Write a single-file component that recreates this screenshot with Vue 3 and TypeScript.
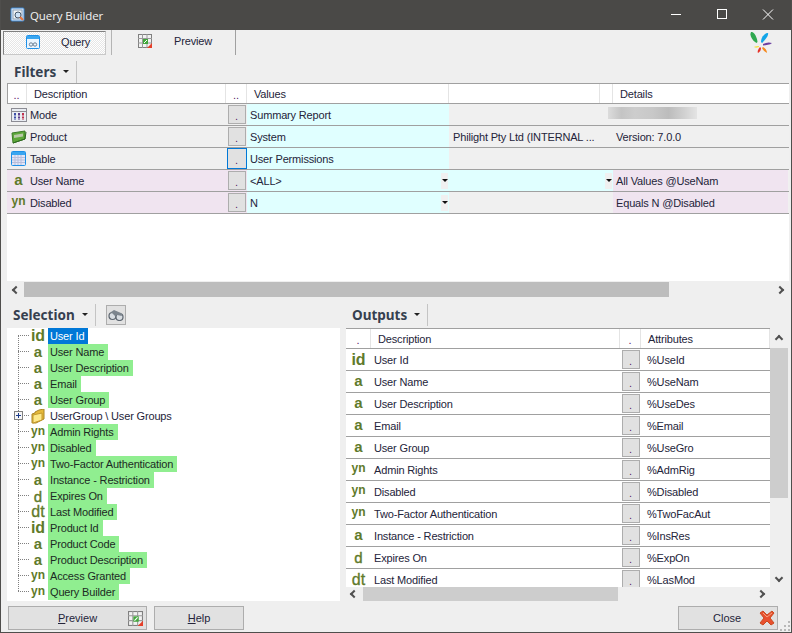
<script setup lang="ts">

type FilterRow = {
    icon: 'mode' | 'product' | 'table' | 'a' | 'yn',
    name: string,
    value: string,
    extra: string,
    details: string,
    blurred?: boolean,
    focused?: boolean,
    pick?: number,
}

const filter_rows: FilterRow[] = [
    { icon: 'mode', name: 'Mode', value: 'Summary Report', extra: '', details: '', blurred: true },
    { icon: 'product', name: 'Product', value: 'System', extra: 'Philight Pty Ltd (INTERNAL ...', details: 'Version: 7.0.0' },
    { icon: 'table', name: 'Table', value: 'User Permissions', extra: '', details: '', focused: true },
    { icon: 'a', name: 'User Name', value: '<ALL>', extra: '', details: 'All Values @UseNam', pick: 2 },
    { icon: 'yn', name: 'Disabled', value: 'N', extra: '', details: 'Equals N @Disabled', pick: 1 },
]

const tree_items = [
    ['id', 'User Id'],
    ['a', 'User Name'],
    ['a', 'User Description'],
    ['a', 'Email'],
    ['a', 'User Group'],
    ['folder', 'UserGroup \\ User Groups'],
    ['yn', 'Admin Rights'],
    ['yn', 'Disabled'],
    ['yn', 'Two-Factor Authentication'],
    ['a', 'Instance - Restriction'],
    ['d', 'Expires On'],
    ['dt', 'Last Modified'],
    ['id', 'Product Id'],
    ['a', 'Product Code'],
    ['a', 'Product Description'],
    ['yn', 'Access Granted'],
    ['yn', 'Query Builder'],
]

const output_rows = [
    ['id', 'User Id', '%UseId'],
    ['a', 'User Name', '%UseNam'],
    ['a', 'User Description', '%UseDes'],
    ['a', 'Email', '%Email'],
    ['a', 'User Group', '%UseGro'],
    ['yn', 'Admin Rights', '%AdmRig'],
    ['yn', 'Disabled', '%Disabled'],
    ['yn', 'Two-Factor Authentication', '%TwoFacAut'],
    ['a', 'Instance - Restriction', '%InsRes'],
    ['d', 'Expires On', '%ExpOn'],
    ['dt', 'Last Modified', '%LasMod'],
]

</script>

<template>
    <div class="window">
        <div class="titlebar">
            <svg class="title-icon" width="16" height="16" viewBox="0 0 16 16">
                <rect x="1" y="1" width="13" height="13" rx="1" fill="#dbe9f8" stroke="#3c86d0" />
                <rect x="3" y="3" width="9" height="9" fill="#f4f4f4" stroke="#8aa0b8" />
                <circle cx="8" cy="8" r="3" fill="#cfe3f7" stroke="#44566a" />
                <path d="M10 10l3 3" stroke="#e8743b" stroke-width="2" />
            </svg>
            <span class="title-text">Query Builder</span>
            <div class="window-controls">
                <svg width="46" height="30" viewBox="0 0 46 30"><path d="M18 14.500h10" stroke="#fff" /></svg>
                <svg width="46" height="30" viewBox="0 0 46 30"><rect x="18.500" y="9.500" width="9" height="9" fill="none" stroke="#fff" /></svg>
                <svg width="46" height="30" viewBox="0 0 46 30"><path d="M18 9.500l10 10M28 9.500l-10 10" stroke="#fff" /></svg>
            </div>
        </div>

        <div class="tabs">
            <div class="tab tab-query">
                <svg width="15" height="15" viewBox="0 0 15 15">
                    <rect x="0.500" y="0.500" width="13" height="13" rx="1" fill="#eaf5ff" stroke="#1e90e8" />
                    <rect x="1" y="1" width="12" height="3" fill="#3aa6f0" />
                    <circle cx="5" cy="9.500" r="1.700" fill="none" stroke="#6a7f94" />
                    <circle cx="9" cy="9.500" r="1.700" fill="none" stroke="#6a7f94" />
                </svg>
                <span>Query</span>
            </div>
            <div class="tab tab-preview">
                <svg width="14" height="14" viewBox="0 0 14 14">
                    <rect x="0.500" y="0.500" width="13" height="13" fill="#f2f2f2" stroke="#808080" />
                    <path d="M0 4.500h14M0 9h14M4.500 0v14M9 0v14" stroke="#9a9a9a" />
                    <rect x="5" y="5" width="5" height="5" fill="#42a83c" />
                    <path d="M6 9l3-3" stroke="#fff" />
                    <path d="M9 14l5-5v5z" fill="#e5402a" />
                </svg>
                <span>Preview</span>
            </div>
            <svg class="logo" width="24" height="24" viewBox="0 0 24 24">
                <path d="M1 1c3-1 6 5 6.500 10l-1 1C3 10-1 5 1 1z" fill="#2fa84f" />
                <path d="M18 2c1 3-4 8-6 10l-1-1c0-4 3-9 7-9z" fill="#12a5e8" />
                <path d="M22 12c-2 2-6 2-9 2.500V13c3-1.500 6-2 9-1z" fill="#6b3fa0" />
                <path d="M17 22c-2-1-4-3-5-5l1-1c2 1 4 3 4 6z" fill="#f58a1f" />
                <path d="M8 22c-1-1 0-4 2-6l1 1c0 2-1 4-3 5z" fill="#e63329" />
                <path d="M4 16c1-1 3-1 5-1v1c-2 1-4 1-5 0z" fill="#f7e14a" />
            </svg>
        </div>

        <div class="section-head filters-head">
            <span class="section-title">Filters</span>
            <span class="caret"></span>
            <span class="section-sep"></span>
        </div>

        <div class="filters">
            <div class="filter-grid">
                <div class="filter-cols filter-header">
                    <div class="hc hc-center">..</div>
                    <div class="hc hc-desc">Description</div>
                    <div class="hc hc-center">..</div>
                    <div class="hc hc-desc">Values</div>
                    <div class="hc"></div>
                    <div class="hc"></div>
                    <div class="hc hc-desc last">Details</div>
                </div>
                <div v-for="row in filter_rows" :key="row.name" class="filter-cols filter-row" :class="{ pink: row.pick }">
                    <div class="filter-desc">
                        <span class="row-icon">
                            <svg v-if="row.icon === 'mode'" width="16" height="16" viewBox="0 0 16 16">
                                <rect x="0.500" y="1.500" width="15" height="13" fill="#e9edf3" stroke="#8c8c94" />
                                <path d="M0 4.500h16" stroke="#8c8c94" />
                                <path d="M3 6h2v7H3z" fill="#3d4fa8" />
                                <path d="M7 6h2v7H7z" fill="#5b3f8f" />
                                <path d="M11 6h2v7h-2z" fill="#c0324f" />
                                <path d="M2 9h12M2 12h12" stroke="#e9edf3" />
                            </svg>
                            <svg v-else-if="row.icon === 'product'" width="16" height="16" viewBox="0 0 16 16">
                                <path d="M1 4l13-2v8L2 14z" fill="#5da83a" stroke="#3d7a2a" />
                                <path d="M3 6l9-1.500v3L3 9z" fill="#b9c9a8" />
                                <path d="M2 14l12-4 1-7" fill="none" stroke="#2e6a20" />
                            </svg>
                            <svg v-else-if="row.icon === 'table'" width="16" height="16" viewBox="0 0 16 16">
                                <rect x="0.500" y="0.500" width="14" height="14" rx="1" fill="#e2e6f6" stroke="#1e90e8" />
                                <rect x="1" y="1" width="13" height="3" fill="#3aa6f0" />
                                <path d="M1 6.500h13M1 9h13M1 11.500h13M4 4v10M7 4v10M10 4v10" stroke="#b9bedb" />
                            </svg>
                            <span v-else class="glyph" :class="`glyph-${row.icon}`">{{ row.icon }}</span>
                        </span>
                        <span>{{ row.name }}</span>
                    </div>
                    <div class="btn-cell">
                        <button class="dot-btn" :class="{ focused: row.focused }">.</button>
                    </div>
                    <div class="filter-value cyan">
                        <span>{{ row.value }}</span>
                        <span v-if="row.pick" class="pick"><i class="mini-caret"></i></span>
                    </div>
                    <div class="filter-extra" :class="{ cyan: row.pick === 2 }">{{ row.extra }}</div>
                    <div class="filter-pick" :class="{ cyan: row.pick === 2 }">
                        <span v-if="row.pick === 2" class="pick"><i class="mini-caret"></i></span>
                    </div>
                    <div class="filter-details">
                        <span v-if="row.blurred" class="blurred"></span>
                        <template v-else>{{ row.details }}</template>
                    </div>
                </div>
            </div>
            <div class="hscroll top-scroll">
                <span class="arrow arrow-left"></span>
                <span class="thumb"></span>
                <span class="arrow arrow-right"></span>
            </div>
        </div>

        <div class="panels">
            <div class="panel-left">
                <div class="section-head panel-head">
                    <span class="section-title">Selection</span>
                    <span class="caret"></span>
                    <span class="section-sep"></span>
                    <span class="bino-btn">
                        <svg width="16" height="12" viewBox="0 0 16 12">
                            <circle cx="4.500" cy="7" r="3.500" fill="#d8dde2" stroke="#5d6670" stroke-width="1.200" />
                            <circle cx="11.500" cy="8" r="3.500" fill="#d8dde2" stroke="#5d6670" stroke-width="1.200" />
                            <path d="M3 3l3-2 7 3 1 3-5-1-2 1z" fill="#7c858e" />
                        </svg>
                    </span>
                </div>
                <div class="tree">
                    <div v-for="[kind, label], index in tree_items" :key="label" class="tree-row">
                        <span class="twig" :class="{ first: index === 0, last: index === tree_items.length - 1 }">
                            <span v-if="kind === 'folder'" class="plus"></span>
                        </span>
                        <span class="tree-icon">
                            <svg v-if="kind === 'folder'" width="15" height="15" viewBox="0 0 15 15">
                                <path d="M1 5l3-1V3l4-2 5-1v10l-8 4H1z" fill="#e5b93a" stroke="#a98527" />
                                <path d="M2 6l9-2v7l-9 3z" fill="#fde98a" stroke="#c49a2d" />
                            </svg>
                            <span v-else class="glyph" :class="`glyph-${kind}`">{{ kind }}</span>
                        </span>
                        <span v-if="kind === 'folder'" class="tree-label plain">{{ label }}</span>
                        <span v-else class="tree-label" :class="index === 0 ? 'selected' : 'marked'">{{ label }}</span>
                    </div>
                </div>
            </div>

            <div class="panel-right">
                <div class="section-head panel-head outputs-head">
                    <span class="section-title">Outputs</span>
                    <span class="caret"></span>
                    <span class="section-sep"></span>
                </div>
                <div class="output-wrap">
                    <div class="output-main">
                        <div class="output-view">
                            <div class="output-cols output-header">
                                <div class="hc hc-center">.</div>
                                <div class="hc hc-desc">Description</div>
                                <div class="hc hc-center">.</div>
                                <div class="hc hc-attr">Attributes</div>
                            </div>
                            <div v-for="[kind, label, attr] in output_rows" :key="label" class="output-cols output-row">
                                <div class="out-icon"><span class="glyph" :class="`glyph-${kind}`">{{ kind }}</span></div>
                                <div class="out-name">{{ label }}</div>
                                <div class="btn-cell"><button class="dot-btn">.</button></div>
                                <div class="out-attr">{{ attr }}</div>
                            </div>
                        </div>
                        <div class="vscroll">
                            <span class="arrow arrow-up"></span>
                            <span class="vthumb"></span>
                            <span class="arrow arrow-down"></span>
                        </div>
                    </div>
                    <div class="hscroll bottom-scroll">
                        <span class="arrow arrow-left"></span>
                        <span class="thumb"></span>
                        <span class="arrow arrow-right"></span>
                    </div>
                </div>
            </div>
        </div>

        <div class="footer">
            <button class="foot-btn preview-btn">
                <span><u>P</u>review</span>
                <svg width="15" height="15" viewBox="0 0 14 14">
                    <rect x="0.500" y="0.500" width="13" height="13" fill="#f2f2f2" stroke="#808080" />
                    <path d="M0 4.500h14M0 9h14M4.500 0v14M9 0v14" stroke="#9a9a9a" />
                    <rect x="5" y="5" width="5" height="5" fill="#42a83c" />
                    <path d="M6 9l3-3" stroke="#fff" />
                    <path d="M9 14l5-5v5z" fill="#e5402a" />
                </svg>
            </button>
            <button class="foot-btn help-btn"><span><u>H</u>elp</span></button>
            <button class="foot-btn close-btn">
                <span>Close</span>
                <svg width="16" height="16" viewBox="0 0 16 16">
                    <path d="M1 3l3-2 4 4 5-4 2 2-4 5 4 5-3 2-4-4-4 4-3-2 4-5z" fill="#e8502f" stroke="#c94a20" />
                    <path d="M4 3l4 4 5-4" fill="none" stroke="#f6a27e" />
                </svg>
            </button>
            <svg class="grip" width="12" height="12" viewBox="0 0 12 12">
                <path d="M9 1h2v2H9zM5 5h2v2H5zM9 5h2v2H9zM1 9h2v2H1zM5 9h2v2H5zM9 9h2v2H9z" fill="#b8b8b8" />
            </svg>
        </div>
    </div>
</template>

<style scoped>
* {
    box-sizing: border-box;
}

.window {
    width: 792px;
    height: 633px;
    display: flex;
    flex-direction: column;
    background: #efefef;
    border: 1px solid #4f4e4c;
    border-top: 0;
    font-family: "Liberation Sans", Arial, sans-serif;
    font-size: 11px;
    letter-spacing: -0.16px;
    color: #24243a;
    overflow: hidden;
}

.titlebar {
    height: 30px;
    flex: none;
    margin: 0 -1px;
    padding-left: 10px;
    display: flex;
    align-items: center;
    background: #4a4947;
    color: #f2f2f2;
}

.title-text {
    margin-left: 4px;
    font-family: "Open Sans", sans-serif;
    font-size: 11.5px;
    letter-spacing: -0.1px;
}

.window-controls {
    margin-left: auto;
    display: flex;
    height: 30px;
    margin-right: 1px;
}

.window-controls svg {
    display: block;
}

.tabs {
    height: 25px;
    flex: none;
    display: flex;
    padding-left: 2px;
}

.tab {
    display: flex;
    align-items: center;
    height: 24px;
}

.tab-query {
    width: 103px;
    margin-top: 1px;
    padding: 0 0 2px 22px;
    gap: 20px;
    border: 1px solid #c8c8c8;
    border-left-color: #808080;
    border-top-color: #808080;
    background: repeating-conic-gradient(#e6e6e6 0 25%, #ffffff 0 50%) 0 0 / 2px 2px;
}

.tab-preview {
    width: 125px;
    height: 25px;
    margin-left: 5px;
    padding: 0 0 3px 26px;
    gap: 22px;
    border-left: 1px solid #b4b4b4;
    border-right: 1px solid #a0a0a0;
}

.logo {
    margin-left: auto;
    margin-right: 17px;
    margin-top: 1px;
}

.section-head {
    display: flex;
    align-items: center;
    flex: none;
}

.filters-head {
    height: 28px;
    padding: 5px 0 0 13px;
}

.section-title {
    font-family: "Noto Sans", sans-serif;
    font-weight: 700;
    font-size: 13.5px;
    letter-spacing: 0;
    color: #36404f;
}

.caret {
    width: 0;
    height: 0;
    margin-left: 7px;
    border: 3px solid transparent;
    border-top: 3px solid #222;
    border-bottom: 0;
}

.section-sep {
    width: 1px;
    height: 22px;
    margin-left: 7px;
    background: #c4c4c4;
}

.filters {
    height: 215px;
    flex: none;
    margin: 0 2px 0 6px;
    display: flex;
    flex-direction: column;
}

.filter-grid {
    height: 198px;
    background: #fff;
    flex: none;
}

.filter-cols {
    display: grid;
    grid-template-columns: 20px 199px 21px 202px 151px 13px 175px;
}

.filter-header {
    height: 21px;
    border-top: 1px solid #a0a0a0;
    border-bottom: 1px solid #a0a0a0;
    box-shadow: inset 1px 0 #a0a0a0;
}

.hc {
    display: flex;
    align-items: center;
    border-right: 1px solid #e4e4e4;
    white-space: nowrap;
}

.hc.last {
    border-right: 0;
}

.hc-center {
    justify-content: center;
    padding-top: 3px;
    color: #5a1a6a;
}

.hc-desc {
    padding-left: 7px;
}

.hc-attr {
    padding-left: 7px;
}

.filter-row {
    height: 22px;
    border-bottom: 1px solid #a0a0a0;
    background: #f0f0f0;
}

.filter-row.pink .filter-desc,
.filter-row.pink .btn-cell,
.filter-row.pink .filter-details {
    background: #f0e4f0;
}

.filter-desc {
    grid-column: span 2;
    display: flex;
    align-items: center;
    white-space: nowrap;
}

.row-icon {
    width: 23px;
    display: flex;
    justify-content: center;
}

.btn-cell {
    display: flex;
    align-items: center;
    justify-content: center;
}

.dot-btn {
    width: 18px;
    height: 19px;
    padding: 3px 0 0;
    border: 1px solid #adadad;
    background: #e1e1e1;
    color: #5a1a6a;
    font-family: "Liberation Sans", Arial, sans-serif;
    font-size: 11px;
    line-height: 1;
}

.dot-btn.focused {
    width: 20px;
    height: 21px;
    border: 1px solid #0078d7;
}

.filter-value {
    grid-column: span 1;
    display: flex;
    align-items: center;
    justify-content: space-between;
    padding-left: 3px;
}

.cyan {
    background: #e0ffff;
}

.pick {
    width: 7px;
    height: 16px;
    display: flex;
    align-items: center;
    justify-content: center;
    background: #f0f0f0;
    margin-right: 1px;
}

.mini-caret {
    width: 0;
    height: 0;
    border: 3px solid transparent;
    border-top: 3px solid #111;
    border-bottom: 0;
}

.filter-extra {
    display: flex;
    align-items: center;
    padding-left: 4px;
    white-space: nowrap;
    overflow: hidden;
}

.filter-pick {
    display: flex;
    align-items: center;
    justify-content: flex-end;
}

.filter-details {
    display: flex;
    align-items: center;
    padding-left: 3px;
    white-space: nowrap;
}

.blurred {
    width: 89px;
    height: 12px;
    margin-left: -8px;
    margin-top: -3px;
    background: linear-gradient(90deg, #dcdcdc, #c4c4c4 15%, #cdcdcd 30%, #c8c8c8 50%, #bcbcbc 68%, #d0d0d0 85%, #e4e4e4);
}

.hscroll {
    display: flex;
    align-items: center;
    flex: none;
}

.top-scroll {
    height: 17px;
}

.top-scroll .thumb {
    width: 645px;
    height: 15px;
    background: #bdbdbd;
}

.top-scroll .arrow-right {
    margin-left: auto;
}

.top-scroll .arrow-left {
    margin: 0 5px 0 6px;
}

.arrow {
    width: 6px;
    height: 6px;
    flex: none;
    border-top: 2px solid #505050;
    border-left: 2px solid #505050;
}

.arrow-left {
    transform: rotate(-45deg);
}

.arrow-right {
    transform: rotate(135deg);
    margin-right: 6px;
}

.arrow-up {
    transform: rotate(45deg);
}

.arrow-down {
    transform: rotate(225deg);
}

.panels {
    height: 303px;
    flex: none;
    display: flex;
    padding-left: 6px;
}

.panel-left {
    width: 333px;
    flex: none;
    display: flex;
    flex-direction: column;
}

.panel-head {
    height: 30px;
    padding: 3px 0 0 6px;
}

.bino-btn {
    width: 20px;
    height: 20px;
    margin-left: 10px;
    display: flex;
    align-items: center;
    justify-content: center;
    border: 1px solid #adadad;
    background: #e1e1e1;
}

.tree {
    height: 273px;
    background: #fff;
}

.tree-row {
    height: 16px;
    display: flex;
    align-items: center;
}

.twig {
    position: relative;
    width: 12px;
    height: 16px;
    flex: none;
    margin-left: 11px;
    background:
        repeating-linear-gradient(90deg, #808080 0 1px, transparent 1px 2px) 0 7px / 100% 1px no-repeat,
        repeating-linear-gradient(180deg, #808080 0 1px, transparent 1px 2px) 0 0 / 1px 100% no-repeat;
}

.twig.first {
    background:
        repeating-linear-gradient(90deg, #808080 0 1px, transparent 1px 2px) 0 7px / 100% 1px no-repeat,
        repeating-linear-gradient(180deg, #808080 0 1px, transparent 1px 2px) 0 8px / 1px 8px no-repeat;
}

.twig.last {
    background:
        repeating-linear-gradient(90deg, #808080 0 1px, transparent 1px 2px) 0 7px / 100% 1px no-repeat,
        repeating-linear-gradient(180deg, #808080 0 1px, transparent 1px 2px) 0 0 / 1px 8px no-repeat;
}

.plus {
    position: absolute;
    left: -4px;
    top: 3px;
    width: 9px;
    height: 9px;
    border: 1px solid #808080;
    background:
        linear-gradient(#1a3a8a, #1a3a8a) center / 5px 1px no-repeat,
        linear-gradient(#1a3a8a, #1a3a8a) center / 1px 5px no-repeat,
        #f6f6f6;
}

.tree-icon {
    width: 16px;
    height: 16px;
    flex: none;
    margin-right: 2px;
    display: flex;
    align-items: center;
    justify-content: center;
}

.tree-label {
    height: 16px;
    line-height: 16px;
    padding: 0 4px 0 2px;
    white-space: nowrap;
}

.marked {
    background: #90ee90;
    color: #1c2a24;
}

.selected {
    background: #0078d7;
    color: #fff;
}

.glyph {
    display: block;
    line-height: 1;
    font-family: "Liberation Sans", Arial, sans-serif;
    font-weight: 700;
    letter-spacing: 0;
    color: #5f7a2b;
    white-space: nowrap;
}

.glyph-id {
    font-size: 16px;
}

.glyph-a {
    font-size: 15px;
    margin-top: -2px;
}

.glyph-yn {
    font-size: 12px;
    margin-top: -3px;
}

.glyph-d {
    font-size: 15px;
    font-weight: 400;
    -webkit-text-stroke: 0.4px #5f7a2b;
}

.glyph-dt {
    font-size: 16px;
    font-weight: 400;
    -webkit-text-stroke: 0.3px #5f7a2b;
}

.panel-right {
    width: 442px;
    flex: none;
    margin-left: 6px;
    display: flex;
    flex-direction: column;
}

.outputs-head {
    padding-left: 6px;
}

.output-wrap {
    height: 273px;
    display: flex;
    flex-direction: column;
}

.output-main {
    height: 259px;
    flex: none;
    display: flex;
}

.output-view {
    width: 424px;
    flex: none;
    background: #fff;
    overflow: hidden;
}

.output-cols {
    display: grid;
    grid-template-columns: 25px 249px 21px 129px;
}

.output-header {
    height: 21px;
    border-top: 1px solid #a0a0a0;
    border-bottom: 1px solid #a0a0a0;
}

.output-header .hc-center {
    padding-top: 2px;
}

.output-row {
    height: 22px;
    border-bottom: 1px solid #a0a0a0;
}

.out-icon {
    display: flex;
    align-items: center;
    justify-content: center;
}

.out-name {
    display: flex;
    align-items: center;
    padding-left: 3px;
    white-space: nowrap;
}

.out-attr {
    display: flex;
    align-items: center;
    padding-left: 6px;
}

.vscroll {
    width: 18px;
    flex: none;
    display: flex;
    flex-direction: column;
    align-items: center;
    padding-top: 8px;
}

.vthumb {
    width: 18px;
    height: 150px;
    margin: 6px 0 auto;
    background: #cdcdcd;
}

.vscroll .arrow-down {
    margin-bottom: 6px;
}

.bottom-scroll {
    width: 424px;
    height: 14px;
}

.bottom-scroll .arrow-left {
    margin: 0 6px 0 5px;
}

.bottom-scroll .thumb {
    width: 255px;
    height: 14px;
    background: #cdcdcd;
}

.bottom-scroll .arrow-right {
    margin-left: auto;
}

.footer {
    position: relative;
    flex: 1;
    display: flex;
    padding: 5px 0 0 7px;
}

.foot-btn {
    height: 24px;
    display: flex;
    align-items: center;
    border: 1px solid #adadad;
    background: #e1e1e1;
    color: #24243a;
    font-family: "Liberation Sans", Arial, sans-serif;
    font-size: 11px;
}

.preview-btn {
    width: 139px;
    padding: 0 3px 0 49px;
    justify-content: space-between;
}

.help-btn {
    width: 90px;
    margin-left: 7px;
    justify-content: center;
}

.close-btn {
    width: 100px;
    margin-left: auto;
    margin-right: 13px;
    padding: 0 2px 0 34px;
    justify-content: space-between;
}

.grip {
    position: absolute;
    right: 0;
    bottom: 0;
}
</style>

<style>
html, body {
    margin: 0;
    background: #efefef;
}
</style>
